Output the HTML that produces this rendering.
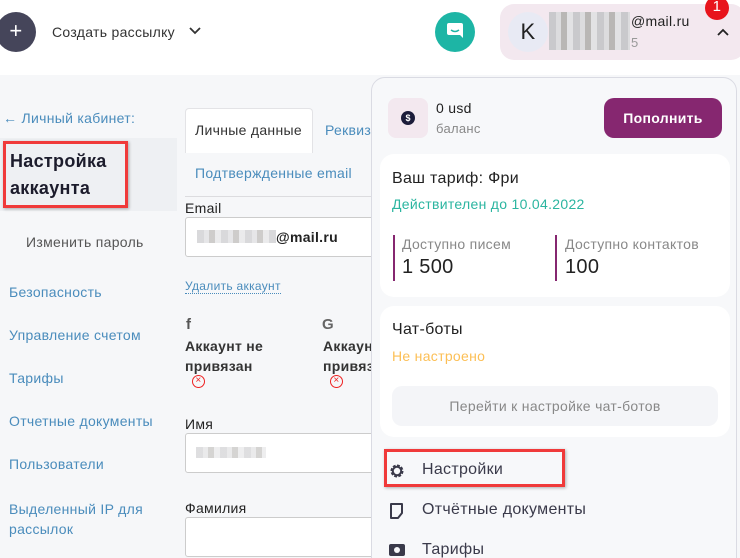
<!DOCTYPE html>
<html style="width:740px;height:558px;overflow:hidden"><head><meta charset="utf-8"><style>
*{margin:0;padding:0;box-sizing:border-box}
body{width:740px;height:558px;overflow:hidden;position:relative;background:#f6f7f9;font-family:"Liberation Sans","DejaVu Sans",sans-serif;color:#2a2a3a;letter-spacing:0.3px}
.a{position:absolute;white-space:nowrap}
.lnk{color:#4a8cbc;font-size:14px}
.blur{background:repeating-linear-gradient(90deg,#c9c9cc 0 7px,#dcdcde 7px 12px,#b9b7b5 12px 18px,#e2e2e4 18px 24px)}
</style></head><body>
<div class="a" style="left:0;top:0;width:740px;height:75px;background:#fff"></div>
<div class="a" style="left:-4px;top:12px;width:40px;height:40px;border-radius:50%;background:#45455a;color:#fff;font-size:22px;text-align:center;line-height:38px">+</div>
<div class="a" style="left:52px;top:24px;font-size:14px;color:#333">Создать рассылку</div>
<svg class="a" style="left:188px;top:26px" width="14" height="10"><path d="M2 2l5 5 5-5" stroke="#333" stroke-width="1.8" fill="none"/></svg>
<div class="a" style="left:435px;top:12px;width:40px;height:40px;border-radius:50%;background:#1db5a5"></div>
<svg class="a" style="left:446px;top:22px" width="18" height="20"><path d="M3 1h12a2 2 0 0 1 2 2v13l-3-3H3a2 2 0 0 1-2-2V3a2 2 0 0 1 2-2z" fill="#fff"/><path d="M5 8q4 3 8 0" stroke="#1db5a5" stroke-width="1.5" fill="none"/></svg>
<div class="a" style="left:500px;top:4px;width:245px;height:56px;border-radius:14px;background:#f3e8ef"></div>
<div class="a" style="left:508px;top:12px;width:40px;height:40px;border-radius:50%;background:#e8eaf4;font-size:22px;text-align:center;line-height:40px;color:#222">K</div>
<div class="a blur" style="left:549px;top:12px;width:81px;height:38px"></div>
<div class="a" style="left:631px;top:13px;font-size:14px;color:#222">@mail.ru</div>
<div class="a" style="left:631px;top:35px;font-size:13px;color:#999">5</div>
<svg class="a" style="left:716px;top:27px" width="14" height="10"><path d="M2 8l5-5 5 5" stroke="#222" stroke-width="1.8" fill="none"/></svg>
<div class="a" style="left:705px;top:-4px;width:24px;height:24px;border-radius:50%;background:#e8141c;color:#fff;font-size:15px;text-align:center;line-height:22px">1</div>

<div class="a lnk" style="left:3px;top:110px">← Личный кабинет:</div>
<div class="a" style="left:0;top:138px;width:177px;height:73px;background:#eef0f3"></div>
<div class="a" style="left:3px;top:141px;width:125px;height:67px;border:3px solid #f03a3a;box-shadow:1px 1px 3px rgba(0,0,0,.3)"></div>
<div class="a" style="left:10px;top:148px;font-size:18px;font-weight:bold;line-height:27px;color:#1c1c2c">Настройка<br>аккаунта</div>
<div class="a" style="left:26px;top:234px;font-size:14px;color:#555">Изменить пароль</div>
<div class="a lnk" style="left:9px;top:284px">Безопасность</div>
<div class="a lnk" style="left:9px;top:327px">Управление счетом</div>
<div class="a lnk" style="left:9px;top:370px">Тарифы</div>
<div class="a lnk" style="left:9px;top:413px">Отчетные документы</div>
<div class="a lnk" style="left:9px;top:456px">Пользователи</div>
<div class="a lnk" style="left:9px;top:499px;line-height:20px">Выделенный IP для<br>рассылок</div>

<div class="a" style="left:185px;top:108px;width:128px;height:45px;background:#fff;border:1px solid #e3e3e6;border-bottom:none;border-radius:4px 4px 0 0"></div>
<div class="a" style="left:195px;top:122px;font-size:14px;color:#333">Личные данные</div>
<div class="a lnk" style="left:325px;top:122px">Реквиз</div>
<div class="a lnk" style="left:195px;top:165px">Подтвержденные email</div>
<div class="a" style="left:185px;top:196px;width:190px;height:1px;background:#dcdcdf"></div>
<div class="a" style="left:185px;top:200px;font-size:14px;color:#222">Email</div>
<div class="a" style="left:185px;top:217px;width:200px;height:40px;background:#fff;border:1px solid #ccc;border-radius:3px"></div>
<div class="a blur" style="left:197px;top:230px;width:79px;height:13px;opacity:.7"></div>
<div class="a" style="left:276px;top:229px;font-size:14px;font-weight:bold;color:#222">@mail.ru</div>
<div class="a" style="left:185px;top:279px;font-size:12px;color:#4a8cbc;border-bottom:1px dotted #4a8cbc">Удалить аккаунт</div>
<div class="a" style="left:186px;top:316px;font-size:15px;font-weight:bold;color:#555">f</div>
<div class="a" style="left:322px;top:316px;font-size:15px;font-weight:bold;color:#666">G</div>
<div class="a" style="left:185px;top:336px;font-size:14px;font-weight:bold;color:#333;line-height:20px">Аккаунт не<br>привязан</div>
<div class="a" style="left:323px;top:336px;font-size:14px;font-weight:bold;color:#333;line-height:20px">Аккаун<br>привяз</div>
<div class="a" style="left:192px;top:375px;width:13px;height:13px;border:1.5px solid #e22;border-radius:50%;color:#e22;font-size:10px;line-height:9px;text-align:center">×</div>
<div class="a" style="left:330px;top:375px;width:13px;height:13px;border:1.5px solid #e22;border-radius:50%;color:#e22;font-size:10px;line-height:9px;text-align:center">×</div>
<div class="a" style="left:185px;top:416px;font-size:14px;color:#222">Имя</div>
<div class="a" style="left:185px;top:433px;width:200px;height:40px;background:#fff;border:1px solid #ccc;border-radius:3px"></div>
<div class="a blur" style="left:196px;top:447px;width:70px;height:11px;opacity:.6"></div>
<div class="a" style="left:185px;top:500px;font-size:14px;color:#222">Фамилия</div>
<div class="a" style="left:185px;top:517px;width:200px;height:40px;background:#fff;border:1px solid #ccc;border-radius:3px"></div>

<div class="a" style="left:371px;top:77px;width:366px;height:500px;background:#f7f8fa;border:1px solid #dadbe3;border-radius:14px"></div>
<div class="a" style="left:388px;top:98px;width:40px;height:40px;border-radius:8px;background:#f3e8ef"></div>
<div class="a" style="left:401px;top:111px;width:14px;height:14px;border-radius:50%;background:#1c1c3a;color:#fff;font-size:9px;text-align:center;line-height:14px;font-weight:bold;letter-spacing:0">$</div>
<div class="a" style="left:436px;top:100px;font-size:14px;color:#222">0 usd</div>
<div class="a" style="left:436px;top:121px;font-size:13px;color:#888">баланс</div>
<div class="a" style="left:604px;top:98px;width:118px;height:40px;border-radius:10px;background:#862770;color:#fff;font-size:14px;font-weight:bold;text-align:center;line-height:40px">Пополнить</div>
<div class="a" style="left:380px;top:154px;width:350px;height:143px;border-radius:14px;background:#fff"></div>
<div class="a" style="left:392px;top:170px;font-size:16px;color:#222">Ваш тариф: Фри</div>
<div class="a" style="left:392px;top:196px;font-size:14px;color:#2bb5a0">Действителен до 10.04.2022</div>
<div class="a" style="left:393px;top:235px;width:2px;height:46px;background:#862770"></div>
<div class="a" style="left:555px;top:235px;width:2px;height:46px;background:#862770"></div>
<div class="a" style="left:402px;top:236px;font-size:14px;color:#888">Доступно писем</div>
<div class="a" style="left:402px;top:256px;font-size:20px;color:#222">1 500</div>
<div class="a" style="left:565px;top:236px;font-size:14px;color:#888">Доступно контактов</div>
<div class="a" style="left:565px;top:256px;font-size:20px;color:#222">100</div>
<div class="a" style="left:380px;top:306px;width:350px;height:131px;border-radius:14px;background:#fff"></div>
<div class="a" style="left:392px;top:321px;font-size:16px;color:#222">Чат-боты</div>
<div class="a" style="left:392px;top:348px;font-size:14px;color:#fcbf55">Не настроено</div>
<div class="a" style="left:392px;top:386px;width:326px;height:40px;border-radius:10px;background:#f4f5f8;color:#888;font-size:14px;text-align:center;line-height:40px">Перейти к настройке чат-ботов</div>
<div class="a" style="left:384px;top:449px;width:181px;height:38px;border:3px solid #f03a3a;box-shadow:1px 1px 3px rgba(0,0,0,.3)"></div>
<svg class="a" style="left:389px;top:463px" width="16" height="16" viewBox="0 0 16 16"><circle cx="8" cy="8" r="5" fill="none" stroke="#3a3a4a" stroke-width="3" stroke-dasharray="2.6 1.3"/><circle cx="8" cy="8" r="4.2" fill="none" stroke="#3a3a4a" stroke-width="2"/></svg>
<div class="a" style="left:422px;top:461px;font-size:16px;color:#3a3a4a">Настройки</div>
<svg class="a" style="left:390px;top:503px" width="14" height="16"><path d="M1 1h11v9l-4 5H1z" fill="none" stroke="#3a3a4a" stroke-width="2" stroke-linejoin="round"/></svg>
<div class="a" style="left:422px;top:501px;font-size:16px;color:#3a3a4a">Отчётные документы</div>
<div class="a" style="left:389px;top:544px;width:16px;height:12px;background:#3a3a4a;border-radius:2px"></div>
<div class="a" style="left:394px;top:547px;width:6px;height:6px;border-radius:50%;background:#f7f8fa"></div>
<div class="a" style="left:422px;top:541px;font-size:16px;color:#3a3a4a">Тарифы</div>
</body></html>
